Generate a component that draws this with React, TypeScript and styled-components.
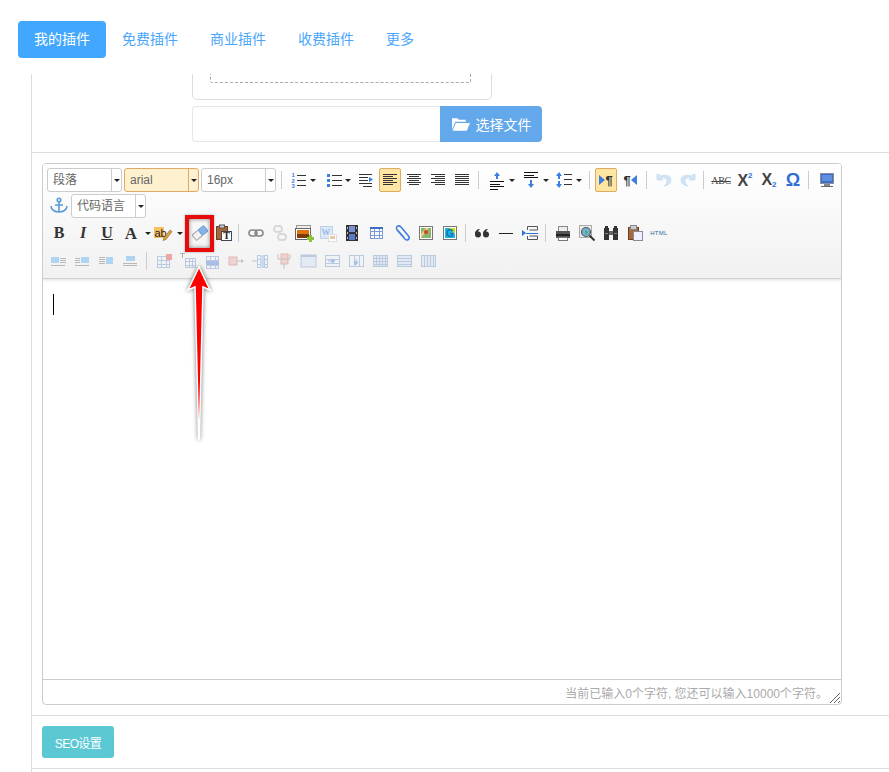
import React from 'react';
import styled, { createGlobalStyle } from 'styled-components';

const Global = createGlobalStyle`
  html, body { margin: 0; padding: 0; background: #fff; }
  body { font-family: "Liberation Sans", "Noto Sans CJK SC", sans-serif; font-size: 12px; color: #333; }
`;

const Page = styled.div`position: relative; width: 889px; height: 772px; overflow: hidden;`;
const Nav = styled.nav`display: flex; height: 74px; padding: 21px 0 0 18px; box-sizing: border-box;`;
const Tab = styled.a<{ $active?: boolean }>`
  height: 37px; line-height: 37px; padding: 0 16px; border-radius: 4px; font-size: 14px;
  color: ${p => (p.$active ? '#fff' : '#4aa6fb')};
  background: ${p => (p.$active ? '#42a7ff' : 'transparent')};
`;
const Main = styled.main`margin-left: 31px; border-left: 1px solid #ddd; height: 698px;`;
const Section = styled.section`padding: 10px 0 10px 10px; border-bottom: 1px solid #ddd;`;
const UploadSection = styled.section`padding: 0 0 10px 160px; border-bottom: 1px solid #ddd;`;
const DropBox = styled.div`
  width: 300px; height: 26px; box-sizing: border-box; border: 1px solid #ddd; border-top: 0;
  border-radius: 0 0 5px 5px; padding: 0 20px 0 17px;
`;
const DashedArea = styled.div`height: 8px; border: 1px dashed #aaa; border-top: 0; border-radius: 0 0 2px 2px;`;
const FileRow = styled.div`display: flex; margin-top: 6px; height: 36px;`;
const FileInput = styled.div`width: 248px; box-sizing: border-box; border: 1px solid #e6e6e6; border-right: 0; border-radius: 4px 0 0 4px;`;
const FileButton = styled.button`
  width: 102px; border: 0; border-radius: 0 4px 4px 0; background: #63a8eb; color: #fff; font: inherit; font-size: 14px;
  display: flex; align-items: center; justify-content: center; gap: 6px; padding: 0;
`;
const Editor = styled.div`
  width: 800px; height: 542px; box-sizing: border-box; border: 1px solid #ccc; border-radius: 4px;
  display: flex; flex-direction: column; overflow: hidden;
`;
const Toolbar = styled.div`
  height: 115px; box-sizing: border-box; padding: 4px 0 4px 4px; display: flex; flex-direction: column; gap: 2px;
  background: linear-gradient(#fff, #f1f1f1); border-bottom: 1px solid #d0d0d0; box-shadow: 0 1px 3px rgba(0,0,0,.14); position: relative;
`;
const Row = styled.div<{ $h: number; $ml?: number }>`
  display: flex; align-items: center; height: ${p => p.$h}px; margin-left: ${p => p.$ml ?? 0}px;
`;
const Combo = styled.div<{ $w?: number; $active?: boolean }>`
  width: ${p => p.$w ?? 75}px; height: 24px; box-sizing: border-box; display: flex; margin-right: 2px;
  border: 1px solid ${p => (p.$active ? '#dfab62' : '#ccc')}; border-radius: 3px; background: ${p => (p.$active ? '#fff1cf' : '#fff')};
`;
const ComboText = styled.span`flex: 1; line-height: 22px; padding-left: 5px; font-size: 12px; color: #666;`;
const ComboArrow = styled.span<{ $active?: boolean }>`
  width: 9px; border-left: 1px solid ${p => (p.$active ? '#dfab62' : '#ccc')};
  display: flex; align-items: center; justify-content: center;
`;
const Caret = styled.i`display: block; width: 0; height: 0; border: 3px solid transparent; border-top: 3px solid #222; border-bottom: 0;`;
const Sep = styled.i<{ $ml: number }>`display: block; width: 1px; height: 18px; background: #ccc; margin-left: ${p => p.$ml}px;`;
const Btn = styled.div<{ $ml?: number; $active?: boolean }>`
  width: 22px; height: 24px; box-sizing: border-box; margin: 0 1px 0 ${p => 1 + (p.$ml ?? 0)}px; flex: none;
  display: flex; align-items: center; justify-content: center; border-radius: 2px; border: 1px solid ${p => (p.$active ? '#dfab62' : 'transparent')};
  background: ${p => (p.$active ? '#ffe6a3' : 'transparent')};
`;
const Split = styled.div<{ $ml?: number; $iw: number; $cw: number }>`
  display: grid; grid-template-columns: ${p => p.$iw}px ${p => p.$cw}px; align-items: center; justify-items: center; height: 24px; margin-left: ${p => p.$ml ?? 0}px; flex: none;
`;
const SerifGlyph = styled.span<{ $italic?: boolean; $under?: boolean; $size?: number }>`
  font-family: "Liberation Serif", serif; font-weight: bold; font-size: ${p => p.$size ?? 16}px; line-height: 1; color: #333;
  font-style: ${p => (p.$italic ? 'italic' : 'normal')}; text-decoration: ${p => (p.$under ? 'underline' : 'none')};
`;
const Strike = styled.span`font-family: "Liberation Serif", serif; font-size: 10px; letter-spacing: -.4px; color: #444; text-decoration: line-through;`;
const Script = styled.span`font-family: "Liberation Sans", sans-serif; font-size: 16px; font-weight: bold; color: #444; display: flex; line-height: 15px;`;
const ScriptNum = styled.small<{ $sub?: boolean }>`font-size: 8px; line-height: 8px; color: #2f6fd6; margin-top: ${p => (p.$sub ? 9 : -1)}px;`;
const Omega = styled.span`font-family: "Liberation Sans", sans-serif; font-weight: bold; font-size: 18px; line-height: 1; color: #2f6fd6;`;
const HtmlMark = styled.span`font-family: "Liberation Sans", sans-serif; font-size: 6px; letter-spacing: .3px; color: #2d6a9f;`;
const Pilcrow = styled.span`display: flex; align-items: center; gap: 0; font-family: "Liberation Sans", sans-serif; font-size: 13px; line-height: 1; font-weight: bold; color: #333;`;
const Tri = styled.i<{ $left?: boolean }>`
  display: block; width: 0; height: 0; border: 5px solid transparent;
  ${p => (p.$left ? 'border-right: 6px solid #3f7de0; border-left: 0;' : 'border-left: 6px solid #3f7de0; border-right: 0;')}
`;
const Body = styled.div`flex: 1; padding: 15px 10px;`;
const Cursor = styled.i`display: block; width: 1px; height: 21px; background: #000;`;
const Foot = styled.div`
  height: 24px; border-top: 1px solid #ccc; display: flex; align-items: center; justify-content: flex-end; position: relative;
  padding-right: 13px; font-size: 12px; color: #aaa;
`;
const Grip = styled.svg`position: absolute; right: 0; bottom: 0;`;
const SeoButton = styled.button`
  display: block; width: 72px; height: 32px; border: 0; border-radius: 3px; background: #5bc8d4; color: #fff; font: inherit; font-size: 12px; letter-spacing: -.6px; padding: 0;
`;
const Highlight = styled.div`
  position: absolute; left: 185px; top: 215px; width: 29px; height: 37px; box-sizing: border-box; border: 4px solid #e60c0c;
  box-shadow: inset 0 0 4px rgba(0,0,0,.5), 0 0 2px rgba(0,0,0,.35);
`;
const Pointer = styled.svg`position: absolute; left: 180px; top: 260px; filter: drop-shadow(0 0 2px rgba(0,0,0,.55));`;

const I: React.FC<{ children: React.ReactNode; s?: number }> = ({ children, s = 20 }) => (
  <svg width={s} height={s} viewBox="0 0 20 20" style={{ display: 'block' }}>{children}</svg>
);
const Bars: React.FC<{ items: [number, number][]; start?: number; step?: number; c?: string }> = ({ items, start = 4, step = 2, c = '#333' }) => (
  <g fill={c} shapeRendering="crispEdges">{items.map(([x, w], i) => <rect key={i} x={x} y={Math.round(start + i * step)} width={w} height={1} />)}</g>
);
const Faded: React.FC<{ children: React.ReactNode }> = ({ children }) => <I><g opacity=".55">{children}</g></I>;
const Grid: React.FC<{ x: number; y: number; w: number; h: number; cols: number; rows: number; c?: string; fill?: string }> = ({ x, y, w, h, cols, rows, c = '#8fa9cf', fill = '#eef3fa' }) => (
  <g shapeRendering="crispEdges">
    <rect x={x + .5} y={y + .5} width={w - 1} height={h - 1} fill={fill} stroke={c} />
    {Array.from({ length: cols - 1 }, (_, i) => <rect key={i} x={x + Math.round((i + 1) * w / cols)} y={y} width={1} height={h} fill={c} />)}
    {Array.from({ length: rows - 1 }, (_, i) => <rect key={i} x={x} y={y + Math.round((i + 1) * h / rows)} width={w} height={1} fill={c} />)}
  </g>
);

const Ol = () => <I><g fontFamily="Liberation Sans" fontSize="6" fontWeight="bold" fill="#3f7de0"><text x="3.500" y="7">1</text><text x="3.500" y="12.500">2</text><text x="3.500" y="18">3</text></g><Bars start={5} step={5} items={[[9, 9], [9, 9], [9, 9]]} /></I>;
const Ul = () => <I><g fill="#3f7de0"><rect x="4" y="4" width="3" height="3" /><rect x="4" y="9" width="3" height="3" /><rect x="4" y="14" width="3" height="3" /></g><Bars start={5} step={5} items={[[9, 10], [9, 10], [9, 10]]} /></I>;
const Indent = () => <I><Bars start={4} step={3} items={[[3, 13], [3, 9], [3, 9], [3, 13], [7, 9]]} /><path d="M13 7l4 2.500-4 2.500z" fill="#3f7de0" /></I>;
const left: [number, number][] = [[3, 14], [3, 10], [3, 14], [3, 10], [3, 14], [3, 10]];
const center: [number, number][] = [[3, 14], [5, 10], [3, 14], [5, 10], [3, 14], [5, 10]];
const right: [number, number][] = [[3, 14], [7, 10], [3, 14], [7, 10], [3, 14], [7, 10]];
const just: [number, number][] = [[3, 14], [3, 14], [3, 14], [3, 14], [3, 14], [3, 14]];
const Align = ({ v }: { v: [number, number][] }) => <I><Bars start={4} items={v} /></I>;
const SpaceTop = () => <I><path d="M10 2l3 4h-2v3H9V6H7z" fill="#3f7de0" /><Bars c="#111" start={11} step={2.500} items={[[3, 14], [3, 10], [3, 14], [3, 8]]} /></I>;
const SpaceBottom = () => <I><Bars c="#111" start={2} step={2.500} items={[[3, 14], [3, 10], [3, 14]]} /><path d="M10 18l3-4h-2v-4H9v4H7z" fill="#3f7de0" /></I>;
const LineHeight = () => <I><path d="M5 2l3 4H6v3H4V6H2zM5 18l3-4H6v-3H4v3H2z" fill="#3f7de0" /><Bars start={4} step={5} items={[[10, 8], [10, 8], [10, 8]]} /></I>;
const Undo = ({ flip }: { flip?: boolean }) => <I><g transform={flip ? 'matrix(-1 0 0 1 20 0)' : undefined}><path d="M3 4v6h6L7 8c3-1 6 .5 6 3 0 2-1 4-3 5 4-.5 7-3 7-6 0-4-5-6-10-4z" fill="#d3e5f5" stroke="#b9d5ec" strokeWidth=".6" /></g></I>;
const Monitor = () => <I><rect x="3.500" y="3.500" width="13" height="10" fill="#3d6fc4" stroke="#8a8fa0" /><rect x="5" y="5" width="10" height="6" fill="#5f8fe0" /><rect x="7" y="14" width="6" height="2" fill="#888" /><rect x="4" y="16" width="12" height="1" fill="#666" /></I>;
const Anchor = () => <I><g fill="none" stroke="#5b9bd5" strokeWidth="1.600"><circle cx="10" cy="4" r="1.800" /><path d="M10 6v10M6 9h8" /><path d="M2 10c0 4 4 6 8 6s8-2 8-6" /></g></I>;
const Highlighter = () => (
  <I><rect x="1" y="4" width="10" height="11" fill="#f7c063" /><text x="1.500" y="13.500" fontFamily="Liberation Sans" fontSize="11" fill="#222">ab</text><path d="M11 15l6-8 2 1.500-6 8-3 1z" fill="#e8a23c" stroke="#7a5a20" strokeWidth=".6" /></I>
);
const Eraser = () => <I><g transform="rotate(-40 10 10)"><rect x="2.500" y="6.500" width="8" height="7" rx="1" fill="#f2f2f2" stroke="#a5a5a5" /><rect x="10.500" y="6.500" width="7" height="7" rx="1" fill="#86b2ec" stroke="#7aa0d4" /></g></I>;
const PasteText = () => <I><rect x="2.500" y="3.500" width="11" height="13" fill="#a8673a" stroke="#6b3f20" /><rect x="5.500" y="2" width="5" height="3" fill="#ccc" stroke="#555" /><rect x="7.500" y="8.500" width="10" height="9" fill="#fff" stroke="#445" /><text x="12.500" y="16" textAnchor="middle" fontFamily="Liberation Serif" fontSize="10" fontWeight="bold" fill="#222">T</text></I>;
const Chain = ({ c = '#888' }: { c?: string }) => <I><g fill="none" stroke={c} strokeWidth="1.600"><rect x="3" y="7" width="8" height="6" rx="3" /><rect x="9" y="7" width="8" height="6" rx="3" /></g></I>;
const Unchain = () => <I><g fill="none" stroke="#d8d8d8" strokeWidth="1.800"><rect x="4" y="3" width="8" height="6" rx="3" /><rect x="8" y="11" width="8" height="6" rx="3" /></g></I>;
const Photo = () => <I><rect x="2.500" y="2.500" width="14" height="10" fill="#eee" stroke="#999" /><rect x="1.500" y="5.500" width="15" height="11" fill="#fff" stroke="#666" /><rect x="3" y="7" width="12" height="8" fill="#e0740f" /><rect x="3" y="11" width="12" height="4" fill="#7a3a0a" /><path d="M13 14h2v-2h3v2h2v3h-2v2h-3v-2h-2z" fill="#8ac43c" /></I>;
const WordDoc = () => <I><rect x="2.500" y="3.500" width="12" height="12" fill="#dbe8f7" stroke="#bcd2ec" /><text x="8" y="12" textAnchor="middle" fontFamily="Liberation Serif" fontSize="9" fill="#7ea5d8">W</text><rect x="10.500" y="11.500" width="8" height="7" fill="#fff" stroke="#ddd" /><rect x="12" y="13" width="5" height="3" fill="#e8c7a5" /></I>;
const Film = () => <I><rect x="4" y="2" width="12" height="16" fill="#333" /><rect x="7" y="3" width="6" height="6" fill="#7a93d8" /><rect x="7" y="11" width="6" height="6" fill="#5b78c8" /><g fill="#bbb"><rect x="5" y="4" width="1" height="2" /><rect x="5" y="9" width="1" height="2" /><rect x="5" y="14" width="1" height="2" /><rect x="14" y="4" width="1" height="2" /><rect x="14" y="9" width="1" height="2" /><rect x="14" y="14" width="1" height="2" /></g></I>;
const TableIcon = () => <I><Grid x={4} y={4} w={13} h={12} cols={3} rows={3} c="#7a9ad4" fill="#fff" /><rect x="4" y="4" width="13" height="2" fill="#3f6cc0" /></I>;
const Clip = () => <I><path d="M5 7l8 9c2.500 2.500 5.500-.5 3.500-3L9 4C6.500 1.500 3 4 5 6.500l7 8" fill="none" stroke="#3f7de0" strokeWidth="1.500" /></I>;
const MapIcon = () => <I><rect x="3.500" y="3.500" width="13" height="13" fill="#fff" stroke="#777" /><rect x="5" y="5" width="10" height="10" fill="#87b56a" /><path d="M5 11l5-6h3L5 15z" fill="#e6d27a" /><circle cx="10" cy="9" r="2" fill="#d83a2e" /></I>;
const GMap = () => <I><rect x="3.500" y="3.500" width="13" height="13" fill="#fff" stroke="#777" /><rect x="5" y="5" width="10" height="10" fill="#19b7e8" /><path d="M9 5h6v6z" fill="#c6dd22" /><text x="10" y="14" textAnchor="middle" fontFamily="Liberation Sans" fontSize="10" fontWeight="bold" fill="#1b6fb0">G</text></I>;
const Quote = () => <I><g fill="#333"><circle cx="6" cy="11.500" r="3" /><circle cx="14" cy="11.500" r="3" /><path d="M3 11c0-3 2-5 5-5-2 1-2 3-2 5zM11 11c0-3 2-5 5-5-2 1-2 3-2 5z" /></g></I>;
const Hr = () => <I><rect x="3" y="10" width="14" height="1" fill="#222" /></I>;
const PageBreak = () => <I><path d="M2 7l4 3-4 3z" fill="#2f6fd6" /><g fill="none" stroke="#555"><path d="M7.500 7V3.500h10V7h-8M7.500 13v3.500h10V13h-8" /></g><rect x="6" y="10" width="12" height="1" fill="#2f6fd6" /></I>;
const Printer = () => <I><rect x="5.500" y="3.500" width="9" height="6" fill="#eee" stroke="#888" /><rect x="3" y="8" width="14" height="7" fill="#555" /><rect x="3" y="11" width="14" height="2" fill="#222" /><rect x="5.500" y="14.500" width="9" height="3" fill="#fff" stroke="#777" /></I>;
const Preview = () => <I><rect x="2.500" y="2.500" width="12" height="12" fill="#eee" stroke="#aaa" /><circle cx="9" cy="9" r="4.500" fill="#6fb3d8" stroke="#555" strokeWidth="1.200" /><path d="M8 7l3 2-2 3z" fill="#5da04a" /><path d="M12.500 12.500l5 5" stroke="#333" strokeWidth="2" /></I>;
const Binoculars = () => <I><g fill="#333"><rect x="3" y="5" width="5" height="12" /><rect x="12" y="5" width="5" height="12" /><rect x="4" y="3" width="3" height="3" /><rect x="13" y="3" width="3" height="3" /><rect x="8" y="8" width="4" height="4" fill="#666" /></g><rect x="4" y="10" width="3" height="1" fill="#888" /><rect x="13" y="10" width="3" height="1" fill="#888" /></I>;
const PastePlain = () => <I><rect x="3.500" y="4.500" width="10" height="12" fill="#a8673a" stroke="#6b3f20" /><rect x="5.500" y="2.500" width="6" height="4" fill="#ccc" stroke="#888" /><rect x="8.500" y="8.500" width="9" height="9" fill="#eef" stroke="#889" /></I>;
const Blk = ({ kind }: { kind: number }) => (
  <I>
    <g shapeRendering="crispEdges" opacity=".8">
      {kind === 0 && <><rect x="3" y="6" width="8" height="6" fill="#9ccdf0" /><Bars c="#aaa" start={7} items={[[12, 6], [12, 6], [12, 6]]} /><rect x="3" y="14" width="14" height="1" fill="#aaa" /></>}
      {kind === 1 && <><rect x="9" y="6" width="8" height="6" fill="#9ccdf0" /><Bars c="#aaa" start={7} items={[[3, 5], [3, 5], [3, 5]]} /><rect x="3" y="14" width="14" height="1" fill="#aaa" /></>}
      {kind === 2 && <><rect x="10" y="6" width="7" height="7" fill="#9ccdf0" /><Bars c="#aaa" start={6} items={[[3, 6], [3, 6], [3, 6], [3, 6]]} /></>}
      {kind === 3 && <><rect x="6" y="5" width="9" height="5" fill="#9ccdf0" /><rect x="3" y="12" width="14" height="1" fill="#aaa" /><rect x="3" y="14" width="14" height="1" fill="#aaa" /></>}
    </g>
  </I>
);
const T1 = () => <Faded><Grid x={3} y={5} w={13} h={12} cols={3} rows={3} /><path d="M12 3h6v6h-6z" fill="#e46a6a" /></Faded>;
const T2 = () => <Faded><rect x="2" y="2" width="5" height="1" fill="#777" /><rect x="4" y="2" width="1" height="5" fill="#777" /><Grid x={7} y={7} w={11} h={10} cols={3} rows={3} /></Faded>;
const T3 = () => <Faded><Grid x={4} y={5} w={13} h={13} cols={3} rows={3} /><rect x="4" y="10" width="13" height="4" fill="#6b93d8" /></Faded>;
const T4 = () => <Faded><rect x="3" y="6" width="8" height="8" fill="#f0b8b8" stroke="#c88" /><path d="M11 10h5" stroke="#999" /><path d="M15 8l3 2-3 2z" fill="#999" /></Faded>;
const T5 = () => <Faded><path d="M2 10h5" stroke="#999" /><Grid x={7} y={4} w={11} h={13} cols={3} rows={3} /><rect x="10" y="4" width="4" height="13" fill="#a9c7ec" /></Faded>;
const T6 = () => <Faded><rect x="7" y="3" width="7" height="10" fill="#f0b8b8" stroke="#c88" /><path d="M4 3v5h12V3M10 13v5" fill="none" stroke="#999" /></Faded>;
const T7 = () => <Faded><rect x="3" y="4" width="15" height="12" fill="#d7e3f4" stroke="#8fa9cf" /><rect x="3" y="4" width="15" height="2" fill="#8fa9cf" /></Faded>;
const T8 = () => <Faded><Grid x={3} y={4} w={15} h={12} cols={1} rows={3} /><path d="M6 10h6M10 8l3 2-3 2z" stroke="#6b93d8" fill="#6b93d8" /></Faded>;
const T9 = () => <Faded><Grid x={3} y={4} w={15} h={12} cols={3} rows={1} /><path d="M10 8v5M8 11l2 3 2-3z" stroke="#6b93d8" fill="#6b93d8" /></Faded>;
const T10 = () => <Faded><Grid x={3} y={4} w={15} h={12} cols={5} rows={4} c="#8fa9cf" fill="#d7e3f4" /></Faded>;
const T11 = () => <Faded><Grid x={3} y={4} w={15} h={12} cols={1} rows={4} c="#8fa9cf" fill="#d7e3f4" /></Faded>;
const T12 = () => <Faded><Grid x={3} y={4} w={15} h={12} cols={5} rows={1} c="#8fa9cf" fill="#d7e3f4" /></Faded>;

const Folder = () => (
  <svg width="19" height="15" viewBox="0 0 18 14"><path d="M1 1h5l1.500 1.500H14V4.500H4L1 12z" fill="#fff" /><path d="M4.500 5.500H18l-3 7.500H1.500z" fill="#fff" /></svg>
);

const ComboBox: React.FC<{ text: string; w?: number; active?: boolean }> = ({ text, w, active }) => (
  <Combo $w={w} $active={active}>
    <ComboText>{text}</ComboText>
    <ComboArrow $active={active}><Caret /></ComboArrow>
  </Combo>
);
const SplitBtn: React.FC<{ ml?: number; iw?: number; cw?: number; children: React.ReactNode }> = ({ ml, iw = 20, cw = 10, children }) => (
  <Split $ml={ml} $iw={iw} $cw={cw}>{children}<Caret /></Split>
);

export default function App() {
  return (
    <Page>
      <Global />
      <Nav>
        <Tab $active>我的插件</Tab><Tab>免费插件</Tab><Tab>商业插件</Tab><Tab>收费插件</Tab><Tab>更多</Tab>
      </Nav>
      <Main>
        <UploadSection>
          <DropBox><DashedArea /></DropBox>
          <FileRow><FileInput /><FileButton><Folder />选择文件</FileButton></FileRow>
        </UploadSection>
        <Section>
          <Editor>
            <Toolbar>
              <Row $h={24}>
                <ComboBox text="段落" /><ComboBox text="arial" active /><ComboBox text="16px" w={75} />
                <Sep $ml={3} />
                <SplitBtn ml={6}><Ol /></SplitBtn>
                <SplitBtn ml={5}><Ul /></SplitBtn>
                <Btn $ml={1}><Indent /></Btn>
                <Btn $active><Align v={left} /></Btn>
                <Btn><Align v={center} /></Btn>
                <Btn><Align v={right} /></Btn>
                <Btn><Align v={just} /></Btn>
                <Sep $ml={4} />
                <SplitBtn ml={8}><SpaceTop /></SplitBtn>
                <SplitBtn ml={4}><SpaceBottom /></SplitBtn>
                <SplitBtn ml={3}><LineHeight /></SplitBtn>
                <Sep $ml={5} />
                <Btn $ml={4} $active><Pilcrow><Tri />¶</Pilcrow></Btn>
                <Btn><Pilcrow>¶<Tri $left /></Pilcrow></Btn>
                <Sep $ml={4} />
                <Btn $ml={5}><Undo /></Btn>
                <Btn><Undo flip /></Btn>
                <Sep $ml={3} />
                <Btn $ml={5}><Strike>ABC</Strike></Btn>
                <Btn><Script>X<ScriptNum>2</ScriptNum></Script></Btn>
                <Btn><Script>X<ScriptNum $sub>2</ScriptNum></Script></Btn>
                <Btn><Omega>Ω</Omega></Btn>
                <Sep $ml={3} />
                <Btn $ml={6}><Monitor /></Btn>
              </Row>
              <Row $h={24}>
                <Btn><Anchor /></Btn>
                <ComboBox text="代码语言" />
              </Row>
              <Row $h={26}>
                <Btn><SerifGlyph>B</SerifGlyph></Btn>
                <Btn><SerifGlyph $italic>I</SerifGlyph></Btn>
                <Btn><SerifGlyph $under>U</SerifGlyph></Btn>
                <SplitBtn iw={24} cw={10}><SerifGlyph $size={17}>A</SerifGlyph></SplitBtn>
                <SplitBtn iw={20} cw={13}><Highlighter /></SplitBtn>
                <Btn $ml={2}><Eraser /></Btn>
                <Btn><PasteText /></Btn>
                <Sep $ml={2} />
                <Btn $ml={5}><Chain /></Btn>
                <Btn><Unchain /></Btn>
                <Btn><Photo /></Btn>
                <Btn><WordDoc /></Btn>
                <Btn><Film /></Btn>
                <Btn><TableIcon /></Btn>
                <Btn $ml={2}><Clip /></Btn>
                <Btn><MapIcon /></Btn>
                <Btn><GMap /></Btn>
                <Sep $ml={3} />
                <Btn $ml={4}><Quote /></Btn>
                <Btn><Hr /></Btn>
                <Btn><PageBreak /></Btn>
                <Sep $ml={3} />
                <Btn $ml={5}><Printer /></Btn>
                <Btn><Preview /></Btn>
                <Btn><Binoculars /></Btn>
                <Btn><PastePlain /></Btn>
                <Btn><HtmlMark>HTML</HtmlMark></Btn>
              </Row>
              <Row $h={26} $ml={-1}>
                <Btn><Blk kind={0} /></Btn>
                <Btn><Blk kind={1} /></Btn>
                <Btn><Blk kind={2} /></Btn>
                <Btn><Blk kind={3} /></Btn>
                <Sep $ml={4} />
                <Btn $ml={5}><T1 /></Btn>
                <Btn><T2 /></Btn>
                <Btn><T3 /></Btn>
                <Btn><T4 /></Btn>
                <Btn><T5 /></Btn>
                <Btn><T6 /></Btn>
                <Btn><T7 /></Btn>
                <Btn><T8 /></Btn>
                <Btn><T9 /></Btn>
                <Btn><T10 /></Btn>
                <Btn><T11 /></Btn>
                <Btn><T12 /></Btn>
              </Row>
            </Toolbar>
            <Body><Cursor /></Body>
            <Foot>
              当前已输入0个字符, 您还可以输入10000个字符。
              <Grip width="12" height="12" viewBox="0 0 12 12">
                <path d="M1 11L11 1M5 11l6-6M9 11l2-2" stroke="#666" strokeWidth="1" />
              </Grip>
            </Foot>
          </Editor>
        </Section>
        <Section><SeoButton>SEO设置</SeoButton></Section>
      </Main>
      <Highlight />
      <Pointer width="40" height="190" viewBox="0 0 40 190">
        <path d="M19 7L30 30 23 27 19.300 179 18.700 179 15 27 8 30z" fill="#f00" stroke="#fff" strokeWidth="1.500" />
      </Pointer>
    </Page>
  );
}
